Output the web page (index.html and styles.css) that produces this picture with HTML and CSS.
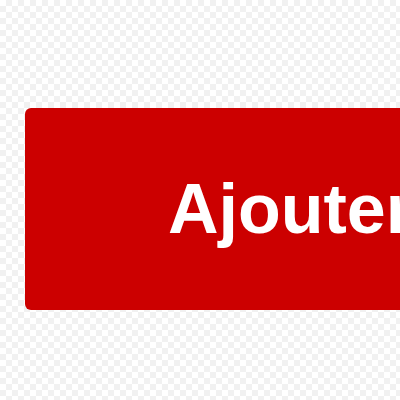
FILE: index.html
```html
<!DOCTYPE html>
<html lang="fr">
<head>
<meta charset="utf-8">
<link rel="stylesheet" href="styles.css">
</head>
<body>
<div class="stage">
  <button class="add-btn" type="button">Ajouter</button>
</div>
</body>
</html>
```
FILE: styles.css
```css
html, body {
  margin: 0;
  padding: 0;
  width: 400px;
  height: 400px;
  overflow: hidden;
}
body {
  background-color: #ffffff;
  background-image: repeating-conic-gradient(#f1f1f1 0 25%, #ffffff 0 50%);
  background-size: 12px 12px;
}
.stage {
  padding: 108px 0 0 25px;
  display: flex;
}
.add-btn {
  flex: none;
  width: 520px;
  height: 202px;
  margin: 0;
  border: none;
  border-radius: 6px;
  background: #cc0000;
  color: #ffffff;
  font-family: "Liberation Sans", Arial, sans-serif;
  font-weight: bold;
  font-size: 70px;
  line-height: 70px;
  padding: 0 0 0 143px;
  display: flex;
  align-items: center;
  justify-content: flex-start;
  text-align: left;
}
```
